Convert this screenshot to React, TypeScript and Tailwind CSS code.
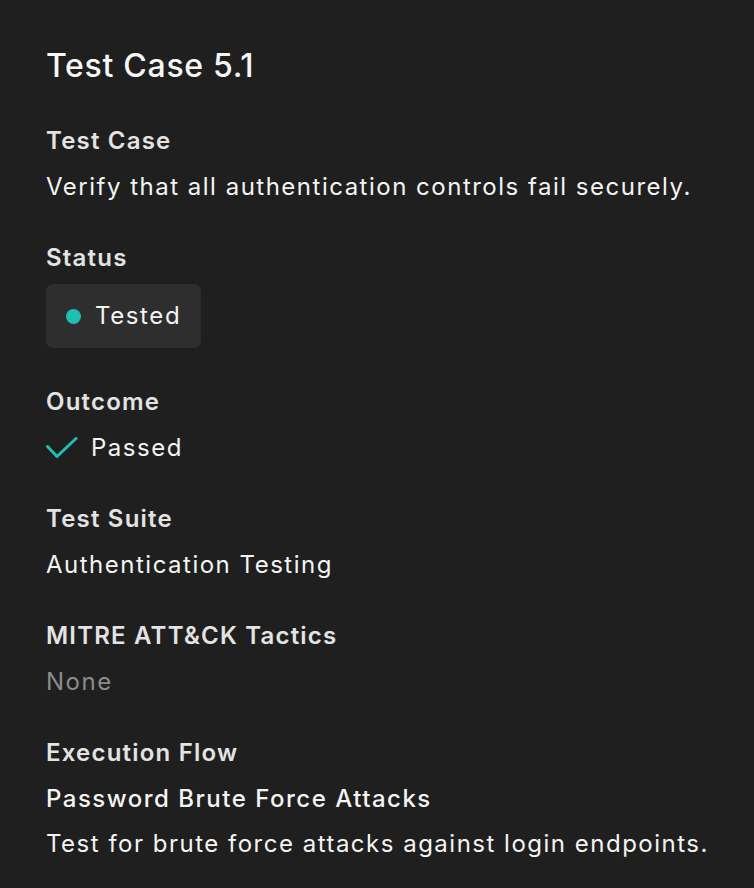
import React from "react";

type Section = {
  label: string;
  body: React.ReactNode;
};

const Label = ({ children }: { children: React.ReactNode }) => (
  <h3 className="text-[24px] leading-[34px] font-semibold tracking-[1.2px] text-[#e3e3e3]">{children}</h3>
);

const Text = ({ children, muted }: { children: React.ReactNode; muted?: boolean }) => (
  <p
    className={`text-[24px] leading-[34px] tracking-[1.5px] whitespace-nowrap ${
      muted ? "text-[#8c8c8c]" : "text-[#f4f4f4]"
    }`}
  >
    {children}
  </p>
);

const CheckIcon = () => (
  <svg width="32" height="22" viewBox="0 0 32 22" fill="none" className="shrink-0">
    <path d="M1.5 9.5 L11 19.5 L30 1.5" stroke="#1fbfb6" strokeWidth="3" strokeLinecap="round" strokeLinejoin="round" />
  </svg>
);

export default function App() {
  const sections: Section[] = [
    {
      label: "Test Case",
      body: <Text>Verify that all authentication controls fail securely.</Text>,
    },
    {
      label: "Status",
      body: (
        <div className="self-start inline-flex items-center gap-[14px] rounded-[7px] bg-[#2e2e2e] h-[64px] pl-[20px] pr-[20px] mt-[-3px]">
          <span className="w-[15px] h-[15px] rounded-full bg-[#1fbfb6]" />
          <span className="text-[24px] leading-[34px] tracking-[1.6px] text-[#f4f4f4]">Tested</span>
        </div>
      ),
    },
    {
      label: "Outcome",
      body: (
        <div className="flex items-center gap-[13px]">
          <CheckIcon />
          <Text>Passed</Text>
        </div>
      ),
    },
    {
      label: "Test Suite",
      body: <Text>Authentication Testing</Text>,
    },
    {
      label: "MITRE ATT&CK Tactics",
      body: <Text muted>None</Text>,
    },
    {
      label: "Execution Flow",
      body: (
        <div className="flex flex-col gap-[11px]">
          <p className="text-[24px] leading-[34px] font-medium tracking-[1.5px] text-[#f4f4f4]">
            Password Brute Force Attacks
          </p>
          <Text>Test for brute force attacks against login endpoints.</Text>
        </div>
      ),
    },
  ];

  return (
    <div
      className="min-h-screen bg-[#1f1f1f] pl-[46px] pr-[20px] pt-[46px] pb-10"
      style={{ fontFamily: "Inter, 'Noto Sans', sans-serif" }}
    >
      <h1 className="text-[32px] leading-[40px] font-medium tracking-[0.7px] text-[#f7f7f7]">Test Case 5.1</h1>
      <div className="mt-[38px] flex flex-col gap-[37px]">
        {sections.map((s) => (
          <section key={s.label} className="flex flex-col gap-[12px]">
            <Label>{s.label}</Label>
            {s.body}
          </section>
        ))}
      </div>
    </div>
  );
}
